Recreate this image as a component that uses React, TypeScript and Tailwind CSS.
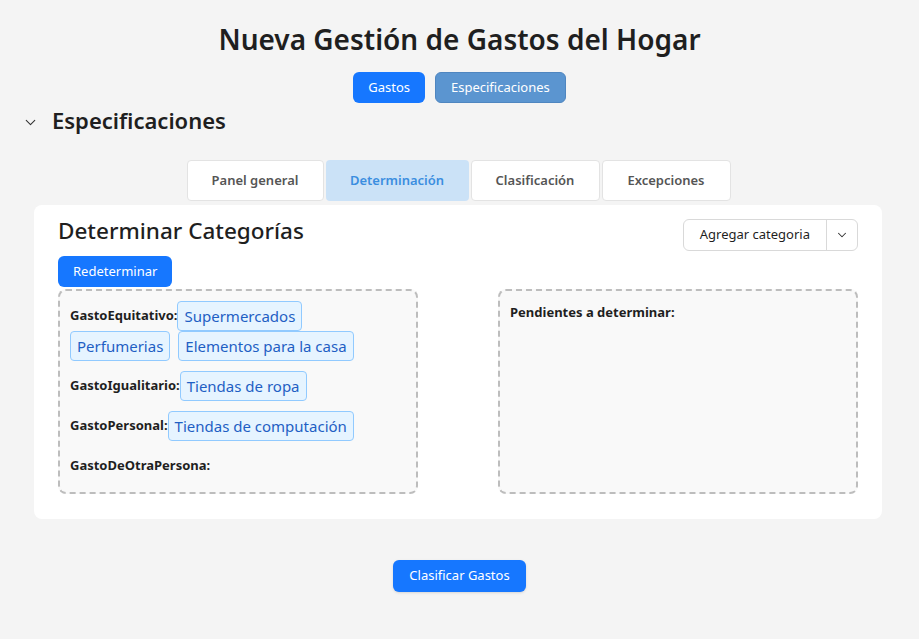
import React from "react";
import { ChevronDown } from "lucide-react";

const groups = [
  { label: "GastoEquitativo:", items: ["Supermercados", "Perfumerias", "Elementos para la casa"] },
  { label: "GastoIgualitario:", items: ["Tiendas de ropa"] },
  { label: "GastoPersonal:", items: ["Tiendas de computación"] },
  { label: "GastoDeOtraPersona:", items: [] as string[] },
];

const tabs = ["Panel general", "Determinación", "Clasificación", "Excepciones"];

function Chip({ text }: { text: string }) {
  return (
    <span className="mr-2 inline-block rounded border border-[#91caff] bg-[#e6f4ff] px-[6px] py-[2px] text-[15px] leading-6 text-[#1f5fc4]">
      {text}
    </span>
  );
}

export default function App() {
  return (
    <div
      className="min-h-screen bg-[#f4f4f4] text-[#1f1f1f]"
      style={{ fontFamily: '"Segoe UI", "Noto Sans", sans-serif' }}
    >
      <div className="flex flex-col items-center pt-[21px]">
        <h1 className="text-[28px] font-semibold leading-9">Nueva Gestión de Gastos del Hogar</h1>
        <div className="mt-[15px] flex gap-[10px]">
          <button className="h-[31px] rounded-md bg-[#1677ff] px-[15px] text-[13px] text-white">Gastos</button>
          <button className="h-[31px] rounded-md border border-[#4f86c0] bg-[#5b95d0] px-[15px] text-[13px] text-white">
            Especificaciones
          </button>
        </div>
      </div>

      <div className="-mt-[1px] flex items-center gap-[13px] pl-[22px]">
        <ChevronDown className="h-[17px] w-[17px] translate-y-[2px] text-[#333]" strokeWidth={1.5} />
        <h2 className="text-[22px] font-semibold leading-9">Especificaciones</h2>
      </div>

      <div className="mt-[22px] flex justify-center gap-[2px] pr-[2px]">
        {tabs.map((t, i) => (
          <div
            key={t}
            className={
              i === 1
                ? "flex h-[41px] w-[143px] items-center justify-center rounded bg-[#cbe2f7] text-[13px] font-semibold text-[#3b8ee0]"
                : "flex h-[41px] items-center justify-center rounded border border-[#e3e3e3] bg-white text-[13px] font-semibold text-[#555]" +
                  (i === 0 ? " w-[137px]" : " w-[129px]")
            }
          >
            {t}
          </div>
        ))}
      </div>

      <div className="ml-[34px] mr-[37px] mt-[4px] rounded-lg bg-white px-[24px] pb-[25px] pt-[8px]">
        <div className="flex items-start justify-between">
          <div>
            <h3 className="text-[22.5px] font-medium leading-9">Determinar Categorías</h3>
            <button className="mt-[7px] h-[31px] rounded-md bg-[#1677ff] px-[15px] text-[13px] text-white">
              Redeterminar
            </button>
          </div>
          <div className="mt-[6px] flex h-[32px] rounded-md border border-[#d9d9d9] bg-white text-[13px]">
            <span className="flex items-center px-[16px]">Agregar categoria</span>
            <span className="flex w-[31px] items-center justify-center border-l border-[#d9d9d9]">
              <ChevronDown className="h-[14px] w-[14px] text-[#333]" strokeWidth={1.8} />
            </span>
          </div>
        </div>

        <div className="mt-[2px] flex justify-between">
          <div className="h-[205px] w-[360px] rounded-lg border-2 border-dashed border-[#bdbdbd] bg-[#f9f9f9] px-[10px] pt-[10px]">
            {groups.map((g) => (
              <div key={g.label} className="mb-[10px] flex min-h-[30px] flex-wrap items-center">
                <span className="text-[13px] font-bold">{g.label}</span>
                {g.items.map((it) => (
                  <Chip key={it} text={it} />
                ))}
              </div>
            ))}
          </div>
          <div className="h-[205px] w-[360px] rounded-lg border-2 border-dashed border-[#bdbdbd] bg-[#f9f9f9] px-[10px] pt-[8px]">
            <span className="text-[13px] font-bold">Pendientes a determinar:</span>
          </div>
        </div>
      </div>

      <div className="mt-[41px] flex justify-center">
        <button className="h-[32px] rounded-md bg-[#1677ff] px-[16px] text-[13px] text-white shadow-sm">
          Clasificar Gastos
        </button>
      </div>
    </div>
  );
}
